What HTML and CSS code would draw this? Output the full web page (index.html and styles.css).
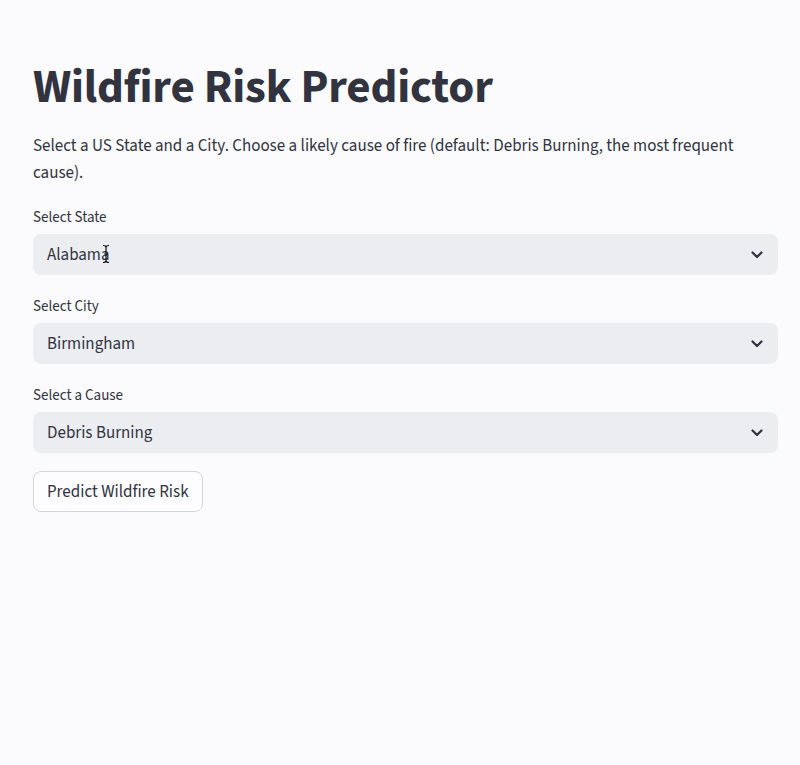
FILE: index.html
```html
<!DOCTYPE html>
<html lang="en">
<head>
<meta charset="utf-8">
<title>Wildfire Risk Predictor</title>
<link rel="stylesheet" href="styles.css">
</head>
<body>
<main class="app">
  <h1 class="title">Wildfire Risk Predictor</h1>
  <p class="intro">Select a US State and a City. Choose a likely cause of fire (default: Debris Burning, the most frequent cause).</p>

  <div class="field">
    <label class="field-label">Select State</label>
    <div class="select">
      <span class="select-value">Alabama</span>
      <svg class="caret" width="12" height="8" viewBox="0 0 12 8"><path d="M1.5 1.5 L6 6 L10.5 1.5" fill="none" stroke="#31333f" stroke-width="2.2" stroke-linecap="round" stroke-linejoin="round"/></svg>
      <svg class="ibeam" width="8" height="20" viewBox="0 0 8 20"><path d="M1 1.5 C3 1.5 4 2 4 3.5 L4 16.5 C4 18 3 18.5 1 18.5 M7 1.5 C5 1.5 4 2 4 3.5 M4 16.5 C4 18 5 18.5 7 18.5 M2.2 10 L5.8 10" fill="none" stroke="#111" stroke-width="1.2"/></svg>
    </div>
  </div>

  <div class="field">
    <label class="field-label">Select City</label>
    <div class="select">
      <span class="select-value">Birmingham</span>
      <svg class="caret" width="12" height="8" viewBox="0 0 12 8"><path d="M1.5 1.5 L6 6 L10.5 1.5" fill="none" stroke="#31333f" stroke-width="2.2" stroke-linecap="round" stroke-linejoin="round"/></svg>
    </div>
  </div>

  <div class="field">
    <label class="field-label">Select a Cause</label>
    <div class="select">
      <span class="select-value">Debris Burning</span>
      <svg class="caret" width="12" height="8" viewBox="0 0 12 8"><path d="M1.5 1.5 L6 6 L10.5 1.5" fill="none" stroke="#31333f" stroke-width="2.2" stroke-linecap="round" stroke-linejoin="round"/></svg>
    </div>
  </div>

  <button class="btn" type="button">Predict Wildfire Risk</button>
</main>
</body>
</html>
```

FILE: styles.css
```css
* {
  box-sizing: border-box;
}

html, body {
  margin: 0;
  padding: 0;
  background: #fbfbfd;
}

body {
  font-family: "Source Sans Pro", "Source Sans 3", Lato, "Noto Sans", sans-serif;
  color: #31333f;
  min-height: 765px;
}

.app {
  width: 800px;
  padding: 60px 22px 0 33px;
  display: flex;
  flex-direction: column;
  align-items: flex-start;
}

.title {
  margin: 0;
  font-size: 47px;
  font-weight: 700;
  line-height: 56px;
  letter-spacing: -0.2px;
}

.intro {
  margin: 17px 0 0;
  font-size: 17px;
  line-height: 27px;
}

.field {
  width: 100%;
  display: flex;
  flex-direction: column;
  margin-top: 20px;
}

.field + .field {
  margin-top: 21px;
}

.field-label {
  font-size: 15px;
  line-height: 21px;
  margin-bottom: 6px;
}

.select {
  position: relative;
  height: 41px;
  border-radius: 8px;
  background: #ebedf1;
  display: flex;
  align-items: center;
  justify-content: space-between;
  padding: 0 15px 0 14px;
}

.select-value {
  font-size: 17px;
}

.caret {
  display: block;
}

.ibeam {
  position: absolute;
  left: 69px;
  top: 10px;
}

.btn {
  margin-top: 18px;
  height: 41px;
  padding: 0 13px;
  border: 1px solid #d4d5d9;
  border-radius: 8px;
  background: #fdfdff;
  color: #31333f;
  font-family: inherit;
  font-size: 17px;
}
```
